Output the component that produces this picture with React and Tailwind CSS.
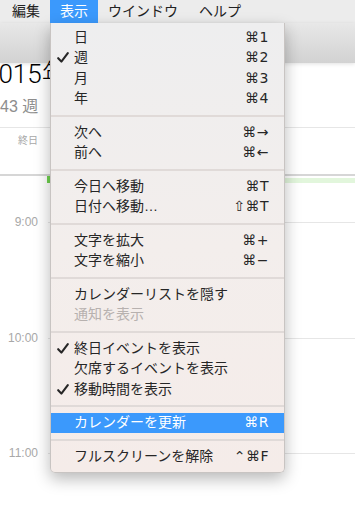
import React from 'react';

const sans = { fontFamily: '"Liberation Sans", "Noto Sans CJK JP", "DejaVu Sans", sans-serif' };
const keys = { fontFamily: '"DejaVu Sans", "Liberation Sans", sans-serif' };

const menuItems = [
    { label: '日', sc: '⌘1' },
    { label: '週', sc: '⌘2', checked: true },
    { label: '月', sc: '⌘3' },
    { label: '年', sc: '⌘4' },
    'sep',
    { label: '次へ', sc: '⌘→' },
    { label: '前へ', sc: '⌘←' },
    'sep',
    { label: '今日へ移動', sc: '⌘T' },
    { label: '日付へ移動…', sc: '⇧⌘T' },
    'sep',
    { label: '文字を拡大', sc: '⌘+' },
    { label: '文字を縮小', sc: '⌘−' },
    'sep',
    { label: 'カレンダーリストを隠す' },
    { label: '通知を表示', disabled: true },
    'sep',
    { label: '終日イベントを表示', checked: true },
    { label: '欠席するイベントを表示' },
    { label: '移動時間を表示', checked: true },
    'sep',
    { label: 'カレンダーを更新', sc: '⌘R', active: true },
    'sep',
    { label: 'フルスクリーンを解除', sc: '⌃⌘F' },
];

const Check = () => (
    <svg width="12" height="11" viewBox="0 0 12 11" fill="none">
        <path d="M1.2 6.2 L4.4 9.6 L10.8 1.2" stroke="currentColor" strokeWidth="2.1" strokeLinecap="round" strokeLinejoin="round" />
    </svg>
);

const HourRow = ({ label }) => (
    <div className="flex items-center h-[14px]">
        <div className="w-[38px] text-right text-[12px] text-[#a8a8a8]">{label}</div>
        <div className="ml-[10px] flex-1 h-px bg-[#e6e6e6]" />
    </div>
);

export default function App() {
    return (
        <div className="relative w-[355px] h-[512px] overflow-hidden bg-white" style={sans}>
            {/* Menu bar */}
            <div className="h-[23px] flex items-stretch pl-[2px] bg-[#ececec] text-[14px] text-[#222]">
                <div className="px-[10px] flex items-center">編集</div>
                <div className="px-[10px] flex items-center bg-[#3b99fc] text-white">表示</div>
                <div className="px-[10px] flex items-center">ウインドウ</div>
                <div className="px-[11px] flex items-center">ヘルプ</div>
            </div>

            {/* Window toolbar */}
            <div className="h-[40px] bg-gradient-to-b from-[#e8e8e8] to-[#d2d2d2] shadow-[0_1px_4px_rgba(0,0,0,0.12)]" />

            {/* Calendar header */}
            <div className="h-[22px] leading-[22px] text-[26px] font-light text-black whitespace-nowrap ml-[-16px]" style={{ fontFamily: 'Roboto, "Noto Sans CJK JP", sans-serif' }}>
                2015年 10月
            </div>
            <div className="mt-[12px] h-[20px] leading-[20px] text-[16px] text-[#8d8d8d]">43 週</div>
            <div className="mt-[10px] h-px bg-[#e6e6e6]" />
            <div className="h-[46px] pt-[6px]">
                <div className="w-[38px] text-right text-[10px] leading-[14px] text-[#a8a8a8]">終日</div>
            </div>
            <div className="h-[2px] bg-[#d6d6d6]" />
            <div className="flex h-[7px]">
                <div className="w-[47px]" />
                <div className="w-[3px] bg-[#6fd24f]" />
                <div className="flex-1 mt-[2px] bg-[#e2f6dc]" />
            </div>

            <div className="mt-[32px]">
                <HourRow label="9:00" />
            </div>
            <div className="mt-[102px]">
                <HourRow label="10:00" />
            </div>
            <div className="mt-[101px]">
                <HourRow label="11:00" />
            </div>

            {/* Dropdown menu */}
            <div className="absolute left-[50px] top-[23px] w-[235px] pt-[4px] pb-[5px] rounded-b-[5px] border-x border-b border-[#c8c4c2] bg-gradient-to-b from-[#eeeeef] via-[#f3eeec] to-[#f5ece9] shadow-[0_6px_16px_rgba(0,0,0,0.28)] text-[14px] text-[#262626]">
                {menuItems.map((it, i) =>
                    it === 'sep' ? (
                        <div key={i} className="h-[13px] flex items-center">
                            <div className="w-full h-[2px] bg-[#e0dad8]" />
                        </div>
                    ) : (
                        <div
                            key={i}
                            className={`h-[20.5px] flex items-center pr-[15px] ${it.active ? 'bg-[#3b99fc] text-white' : ''} ${it.disabled ? 'text-[#b7b1af]' : ''}`}
                        >
                            <div className="w-[23px] pl-[6px] flex items-center">{it.checked && <Check />}</div>
                            <div className="flex-1 whitespace-nowrap">{it.label}</div>
                            {it.sc && <div className="whitespace-nowrap text-[14px] tracking-[0.5px]" style={keys}>{it.sc}</div>}
                        </div>
                    )
                )}
            </div>
        </div>
    );
}
